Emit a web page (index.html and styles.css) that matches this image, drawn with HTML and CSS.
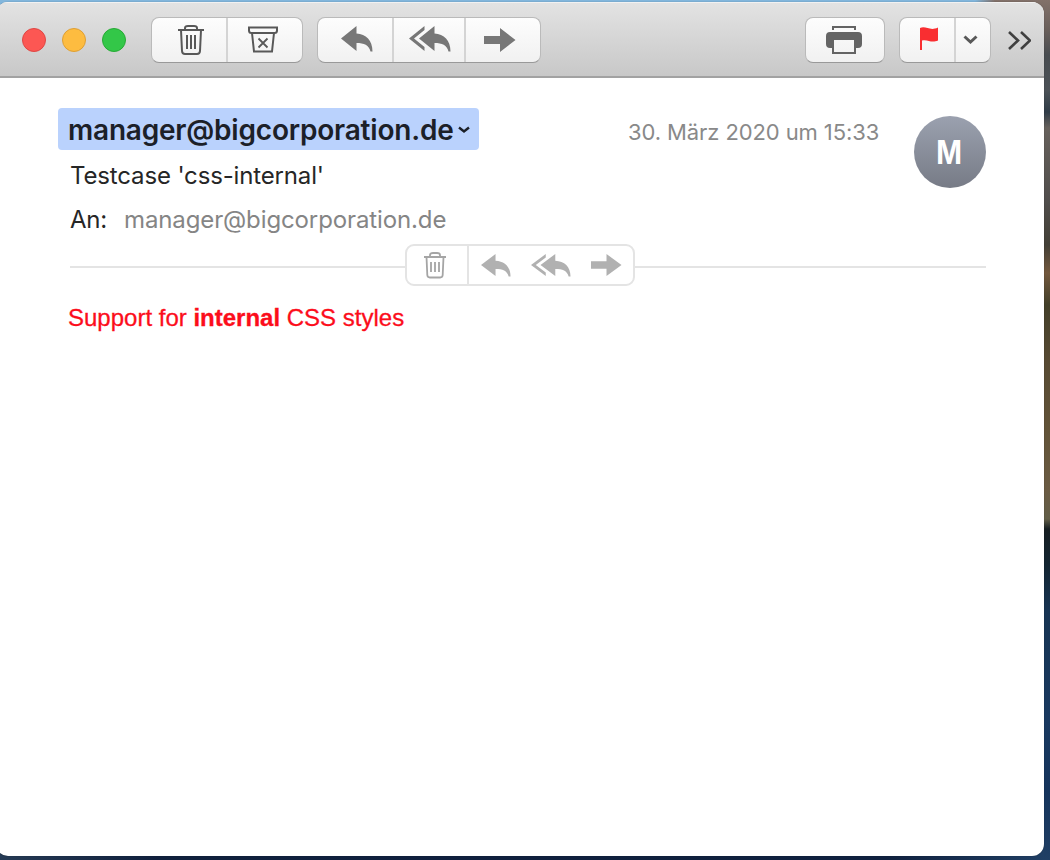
FILE: index.html
```html
<!DOCTYPE html>
<html lang="de">
<head>
<meta charset="utf-8">
<title>Testcase 'css-internal'</title>
<link rel="stylesheet" href="styles.css">
</head>
<body>
<main class="window">
  <header class="toolbar">
    <div class="lights"><i class="close"></i><i class="minimize"></i><i class="zoom"></i></div>
    <div class="group delete">
      <span class="button b-trash"><svg width="28" height="32" viewBox="0 0 28 32" fill="none" stroke="currentColor" stroke-width="2"><path d="M1 6h26M8 6V4Q8 2 11 2h6q3 0 3 2v2M4 6l1 21q.2 3 3 3h12q2.800 0 3-3l1-21M10 11v14M14 11v14M18 11v14"/></svg></span>
      <span class="button b-junk"><svg width="30" height="28" viewBox="0 0 30 28" fill="none" stroke="currentColor" stroke-width="2"><path d="M1 1.500h28v3q0 2.500-2.500 2.500h-23Q1 7 1 4.500zM4 7l2 18.500h18L26 7"/><path d="M10.500 12.500l9 9M19.500 12.500l-9 9" stroke-width="1.800"/></svg></span>
    </div>
    <div class="group respond">
      <span class="button b-reply"><svg width="32" height="26" viewBox="0 0 32 26"><path d="M0 12.500L15.500 0v7.500C25 8 31.500 14 31.500 25.500H29.500C28 19 23 17 15.500 17v8z" fill="currentColor"/></svg></span>
      <span class="button b-all"><svg width="42" height="26" viewBox="0 0 42 26"><path d="M0 12.500L15.500 0v4L5 12.500 15.500 21v4zM10 12.500L25.500 0v7.500C35 8 41.500 14 41.500 25.500H39.500C38 19 33 17 25.500 17v8z" fill="currentColor"/></svg></span>
      <span class="button b-forward"><svg width="32" height="24" viewBox="0 0 32 24"><path d="M0 8h16V0l15.500 12L16 24v-8H0z" fill="currentColor"/></svg></span>
    </div>
    <div class="group print">
      <span class="button b-print"><svg width="36" height="28" viewBox="0 0 36 28"><path d="M6 4V0h24v4h-2V2H8v2z" fill="currentColor"/><path d="M4 6h28q4 0 4 4v8q0 4-4 4h-2v6H6v-6H4q-4 0-4-4v-8q0-4 4-4zm4 8v12h20V14z" fill="currentColor" fill-rule="evenodd"/></svg></span>
    </div>
    <div class="group flag">
      <span class="button b-flag"><svg width="18" height="23" viewBox="0 0 18 23"><path d="M0 1C6-1.500 10 4.500 18 .5V13.500c-7 3-10-1.500-16 0V23H0z" fill="#f92e31"/></svg></span>
      <span class="button b-menu"><svg width="15" height="9" viewBox="0 0 15 9"><path d="M1.500 1.500l6 5.500 6-5.500" fill="none" stroke="currentColor" stroke-width="3"/></svg></span>
    </div>
    <svg class="more" width="23" height="19" viewBox="0 0 23 19"><path d="M1 1l9 8.500L1 18M13 1l9 8.500-9 8.500" fill="none" stroke="#404040" stroke-width="2.600"/></svg>
  </header>
  <article class="message">
    <div class="head">
      <div class="details">
        <div class="sender"><span>manager@bigcorporation.de</span><svg width="12" height="8" viewBox="0 0 12 8"><path d="M1 1.500l5 4 5-4" fill="none" stroke="currentColor" stroke-width="2.400"/></svg></div>
        <div class="subject">Testcase 'css-internal'</div>
        <div class="recipient"><span class="label">An:</span><span class="address">manager@bigcorporation.de</span></div>
      </div>
      <time class="date">30. März 2020 um 15:33</time>
      <div class="avatar"><span>M</span></div>
    </div>
    <div class="divider">
      <span class="line line-left"></span>
      <div class="quick">
        <span class="quick-trash"><svg width="22" height="28" viewBox="0 0 22 28" fill="none" stroke="currentColor" stroke-width="1.800"><path d="M0 6h22M6 6V4Q6 2 9 2h4q3 0 3 2v2M2.500 6l.8 18q.2 2.500 2.500 2.500h10.400q2.300 0 2.500-2.500l.8-18M7 11v10M11 11v10M15 11v10"/></svg></span>
        <span class="quick-respond"><svg width="30" height="23" viewBox="0 0 32 26" preserveAspectRatio="none"><path d="M0 12.500L15.500 0v7.500C25 8 31.500 14 31.500 25.500H29.500C28 19 23 17 15.500 17v8z" fill="currentColor"/></svg><svg width="40" height="23" viewBox="0 0 42 26" preserveAspectRatio="none"><path d="M0 12.500L15.500 0v4L5 12.500 15.500 21v4zM10 12.500L25.500 0v7.500C35 8 41.500 14 41.500 25.500H39.500C38 19 33 17 25.500 17v8z" fill="currentColor"/></svg><svg width="31" height="22" viewBox="0 0 32 24" preserveAspectRatio="none"><path d="M0 8h16V0l15.500 12L16 24v-8H0z" fill="currentColor"/></svg></span>
      </div>
      <span class="line line-right"></span>
    </div>
    <p class="body">Support for <b>internal</b> CSS styles</p>
  </article>
</main>
</body>
</html>
```
FILE: styles.css
```css
* { box-sizing: border-box; }
body {
  margin: 0;
  width: 1050px;
  height: 860px;
  overflow: hidden;
  padding-top: 2px;
  font-family: Inter, sans-serif;
  background:
    linear-gradient(90deg, #82b6dc 0 975px, transparent 995px) 0 0 / 1050px 10px no-repeat,
    linear-gradient(90deg, #263b55, #10203d 15%, #10213f 85%, #203f64) 0 846px / 1044px 14px no-repeat,
    linear-gradient(#82716a 0, #685e5a 30px, #484c50 55px, #4c5257 90px, #303c47 112px, #67615c 128px, #514e4c 200px, #433f36 245px, #73583d 273px, #433f29 305px, #574a33 360px, #625338 430px, #6b5b43 490px, #625e48 519px, #171f22 529px, #142532 565px, #173453 610px, #193960 720px, #15345c 790px, #203f64 860px);
}
svg { display: block; flex: none; }
.window {
  width: 1048px;
  height: 854px;
  margin-left: -4px;
  border-radius: 12px;
  overflow: hidden;
  background: #fff;
  box-shadow: 0 0 1px rgba(0, 0, 0, .5);
}
.toolbar {
  display: flex;
  align-items: center;
  height: 76px;
  padding-left: 26px;
  background: linear-gradient(#e3e3e3, #c8c8c8);
  border-bottom: 2px solid #a2a2a2;
  box-shadow: inset 0 1px #f2f2f2;
  color: #585858;
}
.lights { display: flex; gap: 16px; margin: 2px 25px 0 0; }
.lights i { width: 24px; height: 24px; border: 1px solid #df4744; border-radius: 50%; }
.lights .close { background: #fc5753; }
.lights .minimize { background: #fdbc40; border-color: #de9f34; }
.lights .zoom { background: #33c748; border-color: #27aa35; }
.group {
  display: flex;
  height: 46px;
  margin-top: 2px;
  border: 1px solid #bababa;
  border-bottom-color: #999;
  border-radius: 8px;
  background: linear-gradient(#fdfdfd, #f1f1f1);
}
.button { display: flex; }
.button + .button { border-left: 2px solid #d4d4d4; }
.delete { width: 152px; margin-right: 14px; }
.b-trash { width: 74px; padding: 6px 0 0 25px; }
.b-junk { padding: 8px 0 0 20px; }
.respond { width: 224px; margin-right: 264px; color: #777; }
.b-reply { width: 74px; padding: 8px 0 0 23px; }
.b-all { width: 72px; padding: 8px 0 0 15px; }
.b-forward { padding: 10px 0 0 18px; }
.print { width: 80px; margin-right: 14px; color: #646464; }
.b-print { padding: 8px 0 0 20px; }
.flag { width: 92px; margin-right: 17px; }
.b-flag { width: 54px; padding: 9px 0 0 20px; }
.b-menu { padding: 17px 0 0 7px; }
.more { margin-top: 2px; }
.message { padding: 30px 58px 0 62px; }
.head { display: flex; height: 136px; }
.details { width: 421px; }
.sender {
  display: flex;
  align-items: center;
  height: 42px;
  padding-left: 10px;
  border-radius: 4px;
  background: #bad2fd;
  color: #1c2028;
  font-size: 28px;
  font-weight: 600;
  line-height: 42px;
}
.sender span { width: 385px; margin: 2px 5px 0 0; letter-spacing: -.2px; }
.sender svg { margin-top: 2px; }
.subject { padding: 11px 0 0 12px; font-size: 24px; line-height: 30px; color: #262626; letter-spacing: -.15px; white-space: nowrap; }
.recipient { display: flex; padding: 14px 0 0 12px; font-size: 24px; line-height: 30px; color: #262626; white-space: nowrap; }
.label { width: 54px; letter-spacing: -.2px; }
.address { color: #858585; letter-spacing: -.12px; }
.date { width: 270px; margin-left: 149px; padding-top: 10px; font-size: 22px; line-height: 28px; color: #898989; letter-spacing: -.1px; white-space: nowrap; }
.avatar { width: 72px; height: 72px; margin: 8px 0 0 16px; flex: none; border-radius: 50%; background: linear-gradient(#9ba1af, #777b86); color: #fff; font-size: 32px; font-weight: 700; line-height: 74px; text-align: center; }
.avatar span { display: block; margin-right: 2px; transform: scaleX(.86); }
.divider { display: flex; align-items: center; height: 42px; margin-left: 12px; }
.line { height: 2px; margin-top: 4px; background: #e4e4e4; }
.line-left { width: 335px; }
.line-right { flex: 1; }
.quick { display: flex; width: 230px; height: 42px; border: 2px solid #e4e4e4; border-radius: 9px; color: #b1b1b1; }
.quick-trash { width: 62px; padding: 5px 0 0 17px; border-right: 2px solid #e4e4e4; color: #a5a5a5; }
.quick-respond { display: flex; align-items: flex-start; gap: 20px; padding: 8px 0 0 12px; }
.body { margin: 17px 0 0 10px; color: #fc0d1b; font: 24px/30px "Liberation Sans", Arial, sans-serif; -webkit-text-stroke: .3px; }
```
